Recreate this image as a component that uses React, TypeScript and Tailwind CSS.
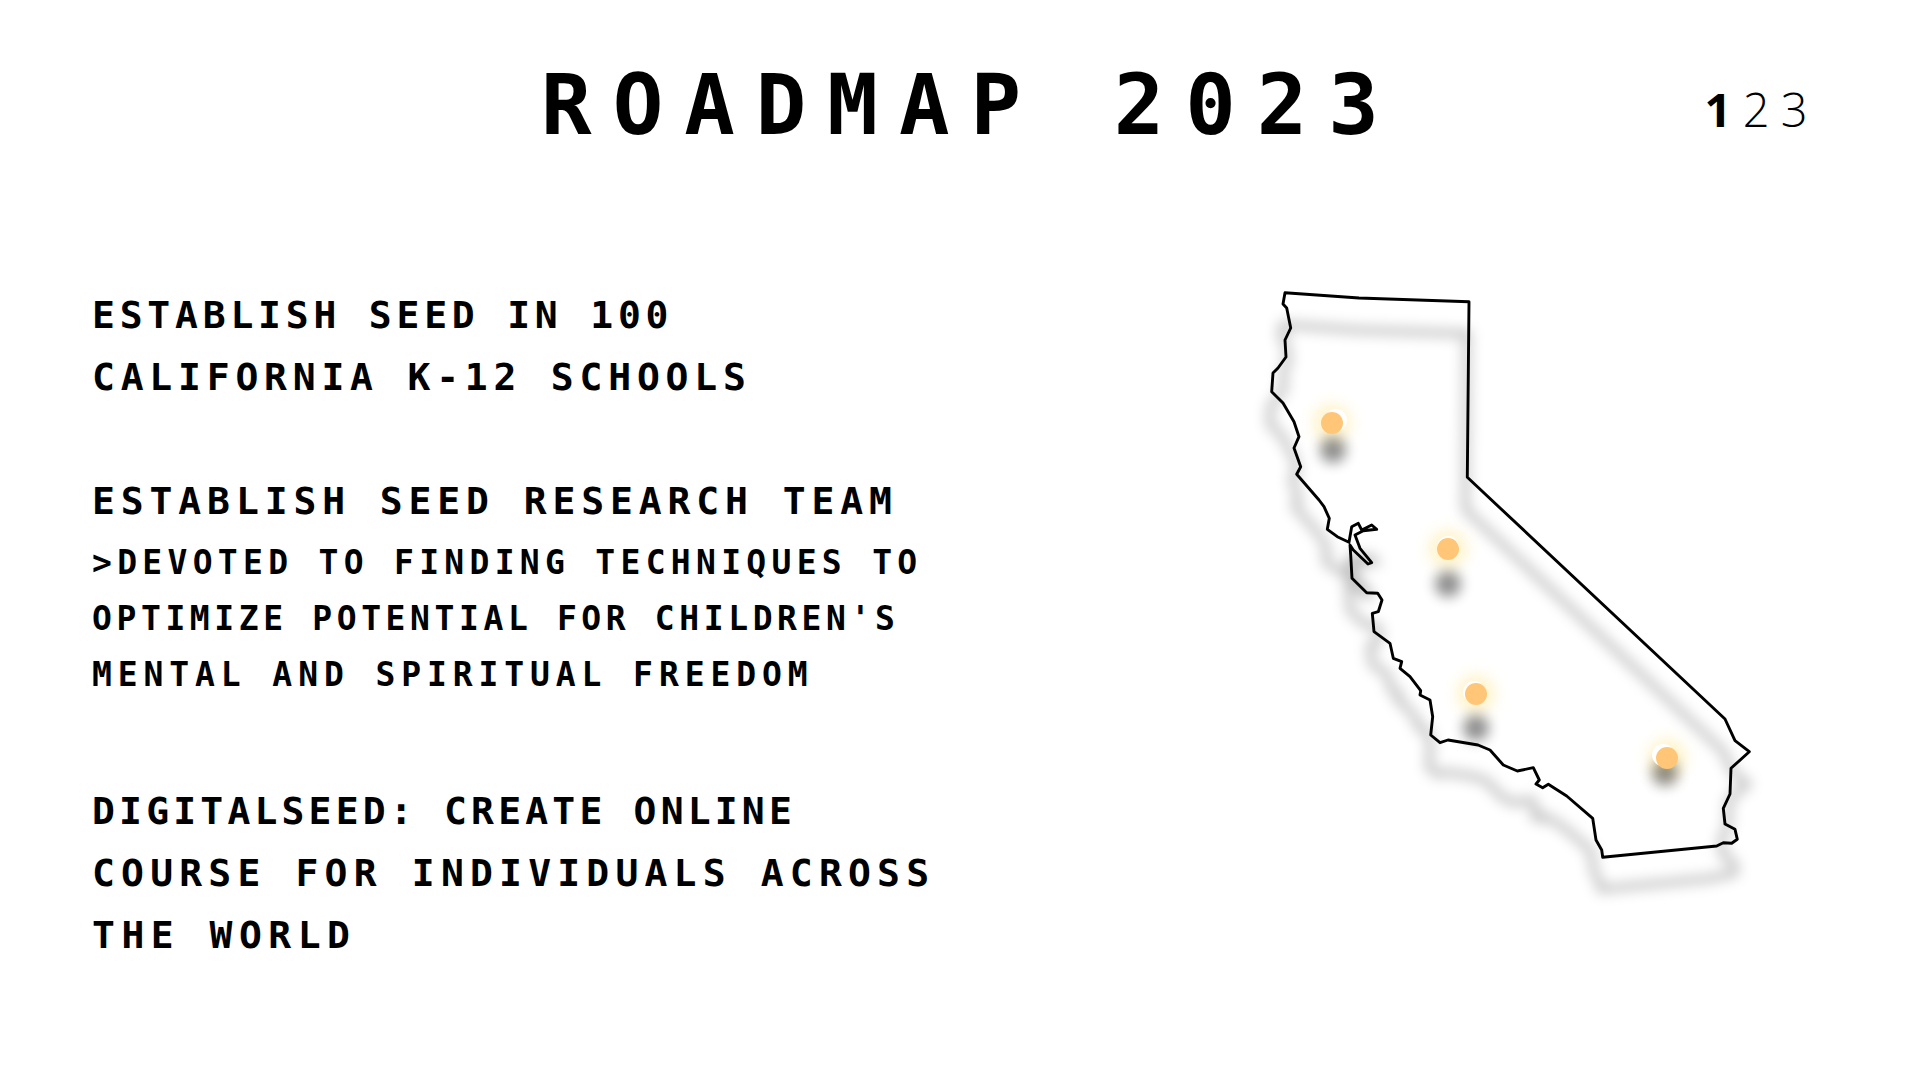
const OUTLINE =
  "M1285,292.7 L1359,298 L1469,301.7 L1467.3,477.3 L1725,719 L1735,740.7 L1749.3,751.7 L1731,768.3 L1730,794 L1723.3,808.3 L1725,824 L1735,829.3 L1737.3,839.3 L1731.7,843.3 L1723.3,842.7 L1716.7,846 L1602.7,857.3 L1601.7,850 L1596,840 L1592.7,818.3 L1566.7,796 L1548.3,784.3 L1542.7,787.7 L1536,784 L1539.3,780 L1533.3,767.7 L1517.3,771 L1503.3,765 L1490,750 L1478,745 L1448,740 L1440,742.7 L1430.7,735 L1432.7,716.7 L1430,700 L1420,695 L1420.7,690.7 L1410,676.7 L1400,668.3 L1401.7,661.7 L1393.3,658.3 L1390,643.3 L1374,631.7 L1372.3,613.3 L1378.3,611.7 L1382,600 L1377.7,593.3 L1366.7,592.7 L1352,578.3 L1350.7,555 L1350,545 L1353.3,550 L1368,564 L1371.7,562.7 L1360,548.3 L1355,535 L1363.3,530.7 L1376.7,529.3 L1371.7,525 L1361.7,530 L1358.3,523.3 L1351.7,526.7 L1349,542.3 L1337.3,536.7 L1327.3,529.3 L1329.3,518.3 L1324,506.7 L1319,500 L1296.7,474.3 L1300.7,466.7 L1294,448 L1299,436.7 L1294,421.7 L1283,403 L1271.7,391.7 L1273,373 L1278,368 L1286,357 L1285,340 L1290.7,328 L1286.7,308 L1283,304 Z";

const DOTS = [
  { x: 1332, y: 423, sx: 1333, sy: 450, hx: 1336, hy: 420 },
  { x: 1448, y: 549, sx: 1448, sy: 584, hx: 1448, hy: 547 },
  { x: 1476, y: 694, sx: 1476, sy: 728, hx: 1474, hy: 692 },
  { x: 1667, y: 758, sx: 1665, sy: 773, hx: 1663, hy: 755 },
];

function CaliforniaMap() {
  return (
    <svg width="520" height="660" viewBox="1250 270 520 660" fill="none" className="shrink-0">
      <defs>
        <filter id="outlineBlur" x="-10%" y="-10%" width="120%" height="120%">
          <feGaussianBlur stdDeviation="6.5" />
        </filter>
        <filter id="dotBlur" x="-100%" y="-100%" width="300%" height="300%">
          <feGaussianBlur stdDeviation="6.5" />
        </filter>
        <filter id="glowBlur" x="-100%" y="-100%" width="300%" height="300%">
          <feGaussianBlur stdDeviation="7" />
        </filter>
      </defs>
      <path
        d={OUTLINE}
        transform="translate(-2 32)"
        stroke="#000"
        strokeOpacity="0.26"
        strokeWidth="7"
        filter="url(#outlineBlur)"
      />
      {DOTS.map((d) => (
        <g key={d.x}>
          <circle cx={d.x} cy={d.y} r="20" fill="#ffeeb0" opacity="0.6" filter="url(#glowBlur)" />
          <circle cx={d.sx} cy={d.sy} r="13" fill="#000" opacity="0.44" filter="url(#dotBlur)" />
          <circle cx={d.hx} cy={d.hy} r="11" fill="#fff" />
          <circle cx={d.x} cy={d.y} r="11" fill="#ffc677" />
        </g>
      ))}
      <path d={OUTLINE} stroke="#000" strokeWidth="2.9" strokeLinejoin="round" />
    </svg>
  );
}

const pixel = "font-['DejaVu_Sans_Mono',monospace] font-bold uppercase whitespace-nowrap text-black";
const big = `${pixel} h-[62px] leading-[62px] text-[38px]`;
const small = `${pixel} h-[56px] leading-[56px] text-[33px]`;

export default function App() {
  return (
    <div className="w-[1920px] h-[1080px] bg-white overflow-hidden flex flex-col">
      <header className="h-[284px] pt-[63px] grid grid-cols-[1fr_auto_1fr] items-start">
        <div />
        <h1 className={`${pixel} ml-[21px] text-[84px] leading-[85px] tracking-[21px]`}>Roadmap 2023</h1>
        <div className="flex justify-end pt-[14px] pr-[113px]">
          <span className="font-['Open_Sans',sans-serif] font-light text-[47px] leading-[64px] tracking-[-0.5px] text-black whitespace-pre">
            <span className="font-bold">1</span> 2 3
          </span>
        </div>
      </header>
      <main className="flex-1 flex justify-between pl-[92px] pr-[150px]">
        <div className="flex flex-col">
          <section className="flex flex-col">
            <p className={`${big} tracking-[4.8px]`}>Establish SEED in 100</p>
            <p className={`${big} tracking-[5.8px]`}>California K-12 schools</p>
          </section>
          <section className="flex flex-col mt-[62px]">
            <p className={`${big} tracking-[5.9px]`}>Establish SEED Research Team</p>
            <p className={`${small} mt-[3px] tracking-[5.3px]`}>&gt;Devoted to finding techniques to</p>
            <p className={`${small} tracking-[4.6px]`}>optimize potential for children's</p>
            <p className={`${small} tracking-[5.9px]`}>mental and spiritual freedom</p>
          </section>
          <section className="flex flex-col mt-[77px]">
            <p className={`${big} tracking-[4.2px]`}>DigitalSEED: Create online</p>
            <p className={`${big} tracking-[6.2px]`}>course for individuals across</p>
            <p className={`${big} tracking-[6.5px]`}>the world</p>
          </section>
        </div>
        <div className="-mt-[14px]">
          <CaliforniaMap />
        </div>
      </main>
    </div>
  );
}
